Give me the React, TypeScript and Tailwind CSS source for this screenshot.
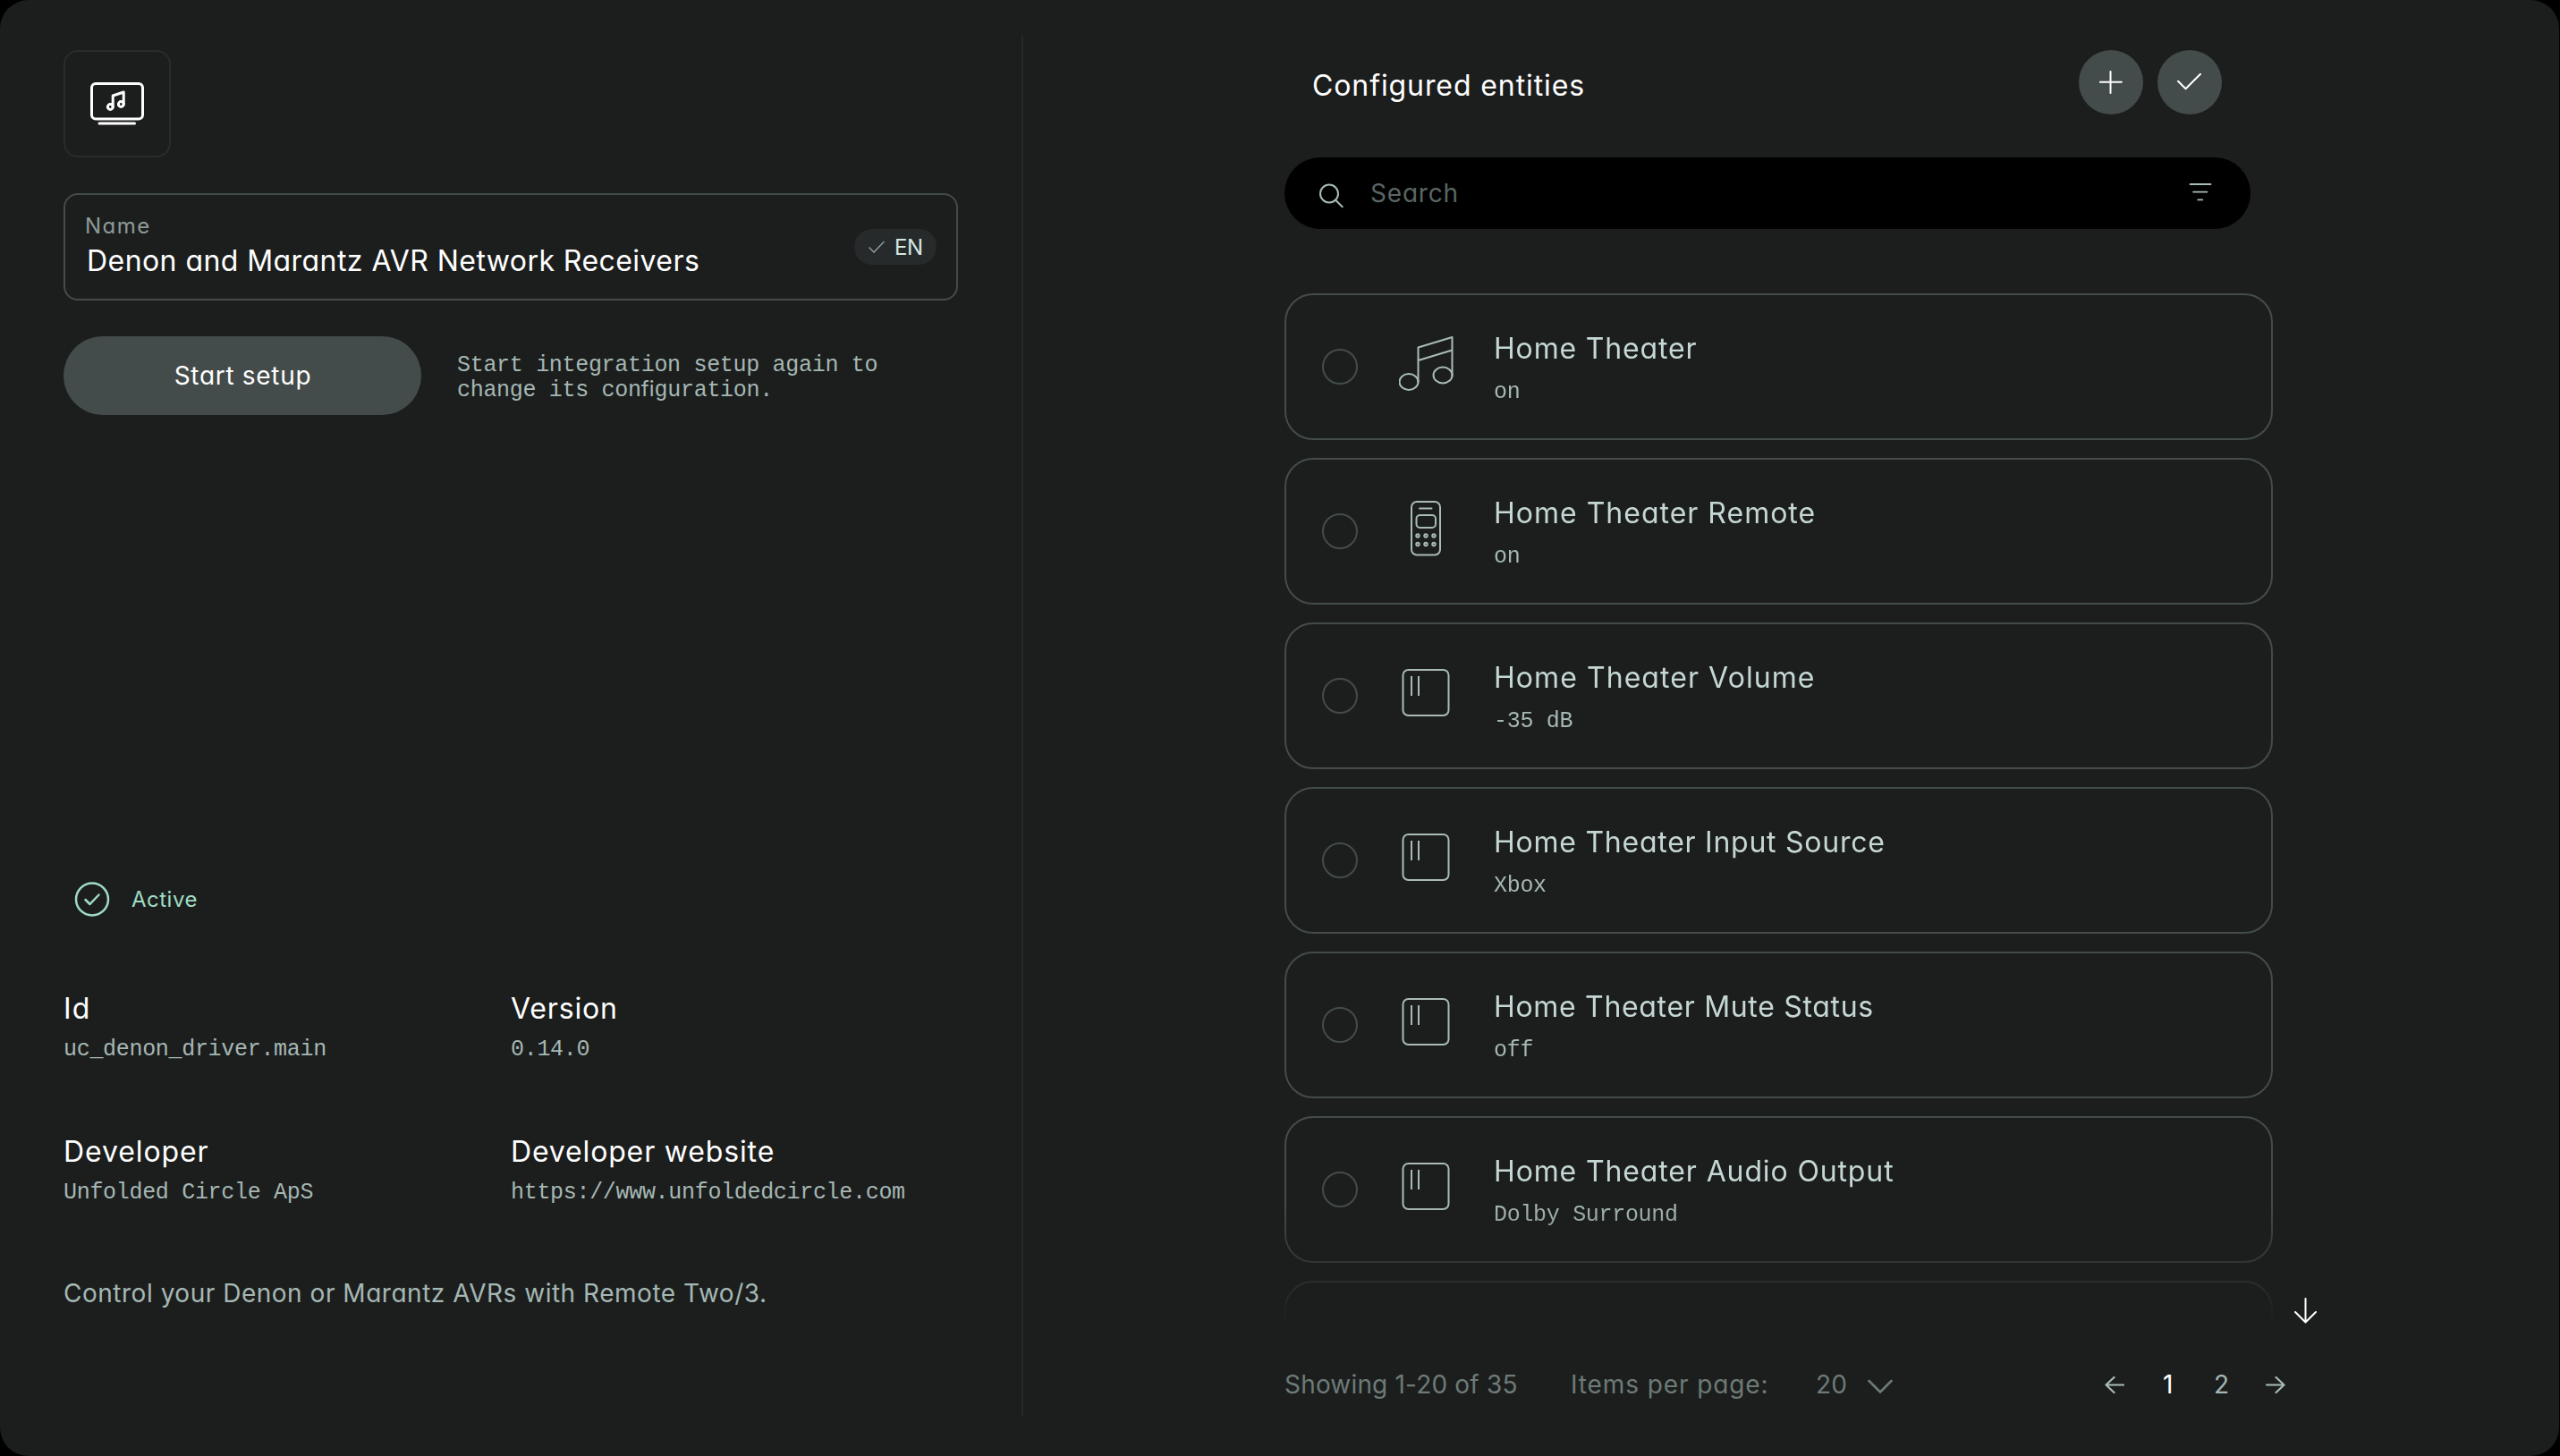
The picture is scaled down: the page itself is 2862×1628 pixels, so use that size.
import type { ReactNode } from "react";

const sans = "font-['Inter',sans-serif] [font-feature-settings:'cv11']";
const mono = "font-['Liberation_Mono',monospace] text-[25px] leading-[28px] tracking-[-0.31px] text-[#a5b7b4]";

function MusicIcon() {
  return (
    <svg width="62" height="62" viewBox="0 0 62 62" fill="none" stroke="#a9bbb8" strokeWidth="2" strokeLinejoin="round">
      <ellipse cx="11" cy="51" rx="10.5" ry="9" />
      <ellipse cx="49" cy="43.5" rx="10.5" ry="9" />
      <path d="M21.500 51.500V12.500L59.500 1V44.500M21.500 27L59.500 15.500" />
    </svg>
  );
}

function RemoteIcon() {
  return (
    <svg width="62" height="62" viewBox="0 0 62 62" fill="none" stroke="#a9bbb8" strokeWidth="2">
      <rect x="14" y="1" width="32" height="59.500" rx="6" />
      <path d="M23 8.500h13.500" strokeLinecap="round" />
      <rect x="19.500" y="16" width="21.500" height="14" rx="4" />
      {[39, 48.5].map((y) =>
        [21, 30, 39].map((x) => <circle key={`${x}-${y}`} cx={x} cy={y} r="1.700" />)
      )}
    </svg>
  );
}

function SensorIcon() {
  return (
    <svg width="62" height="62" viewBox="0 0 62 62" fill="none" stroke="#a9bbb8" strokeWidth="2">
      <rect x="4.500" y="5" width="51" height="51" rx="6" />
      <path d="M14 12v22M22 12v22" />
    </svg>
  );
}

const entities: { name: string; state: string; icon: ReactNode; spacing: string }[] = [
  { name: "Home Theater", state: "on", icon: <MusicIcon />, spacing: "tracking-[0.84px]" },
  { name: "Home Theater Remote", state: "on", icon: <RemoteIcon />, spacing: "tracking-[1px]" },
  { name: "Home Theater Volume", state: "-35 dB", icon: <SensorIcon />, spacing: "tracking-[1.06px]" },
  { name: "Home Theater Input Source", state: "Xbox", icon: <SensorIcon />, spacing: "tracking-[0.75px]" },
  { name: "Home Theater Mute Status", state: "off", icon: <SensorIcon />, spacing: "tracking-[0.68px]" },
  { name: "Home Theater Audio Output", state: "Dolby Surround", icon: <SensorIcon />, spacing: "tracking-[0.87px]" },
];

const details = [
  { label: "Id", value: "uc_denon_driver.main", spacing: "tracking-[1.2px]" },
  { label: "Version", value: "0.14.0", spacing: "tracking-[0.84px]" },
  { label: "Developer", value: "Unfolded Circle ApS", spacing: "tracking-[0.9px]" },
  { label: "Developer website", value: "https://www.unfoldedcircle.com", spacing: "tracking-[0.85px]" },
];

function IntegrationPanel() {
  return (
    <section className="flex w-[1142px] shrink-0 flex-col pt-14 pl-[71px]">
      <div className="flex size-[120px] items-center justify-center rounded-2xl border-2 border-[#292c2b]">
        <svg width="60" height="48" viewBox="0 0 60 48" fill="none" stroke="#fff" strokeWidth="3" strokeLinecap="round" strokeLinejoin="round">
          <rect x="1.500" y="1.500" width="57" height="39.500" rx="4.500" />
          <path d="M10 46h39.500" />
          <circle cx="22.300" cy="27.500" r="2.900" />
          <circle cx="34.300" cy="24.500" r="2.900" />
          <path d="M25.200 27.500V15L37.200 11V24.500" />
        </svg>
      </div>

      <div className="mt-10 flex h-[120px] w-[1000px] items-center justify-between rounded-2xl border-2 border-[#434c4a] pr-[22px] pl-[22px]">
        <div className="flex h-full flex-col pt-[19px]">
          <label className="text-[24px] leading-8 tracking-[1.5px] text-[#8d9b98]">Name</label>
          <span className="mt-[3px] ml-0.5 text-[32px] leading-10 tracking-[0.44px] text-white">
            Denon and Marantz AVR Network Receivers
          </span>
        </div>
        <div className="flex h-10 w-[92px] items-center gap-[11px] rounded-full bg-[#262a2b] pl-4">
          <svg width="18" height="14" viewBox="0 0 18 14" fill="none" stroke="#8d9b98" strokeWidth="1.500">
            <path d="M.5 7.500L6 13 17.500 1" />
          </svg>
          <span className="mt-px text-[24px] leading-8 tracking-[-0.43px] text-[#d5e6e2]">EN</span>
        </div>
      </div>

      <div className="mt-10 flex gap-10">
        <button className="h-[88px] w-[400px] rounded-full bg-[#434c4a] pl-px text-[28px] leading-8 tracking-[0.7px] text-white">
          Start setup
        </button>
        <p className={`w-[500px] pt-[19px] ${mono}`}>
          Start integration setup again to
          <br />
          change its con<span className="font-['Inter',sans-serif] text-[24px] leading-none tracking-[0.1px]">fi</span>guration.
        </p>
      </div>

      <div className="mt-[522px] flex h-10 items-center gap-6 pl-3">
        <svg width="40" height="40" viewBox="0 0 40 40" fill="none" stroke="#9fdcc4" strokeWidth="2.500" strokeLinecap="round" strokeLinejoin="round">
          <circle cx="20" cy="19.500" r="18" />
          <path d="M12.500 20L17.500 25 27.500 14.500" />
        </svg>
        <span className="text-[24px] leading-8 tracking-[0.5px] text-[#9fdcc4]">Active</span>
      </div>

      <dl className="mt-[82px] grid w-[1000px] grid-cols-2 gap-y-20">
        {details.map((d) => (
          <div key={d.label} className="flex flex-col gap-3">
            <dt className={`text-[32px] leading-10 text-white ${d.spacing}`}>{d.label}</dt>
            <dd className={mono}>{d.value}</dd>
          </div>
        ))}
      </dl>

      <p className="mt-[82px] text-[28px] leading-8 tracking-[0.52px] text-[#a5b7b4]">
        Control your Denon or Marantz AVRs with Remote Two/3.
      </p>
    </section>
  );
}

function EntitiesPanel() {
  return (
    <section className="flex flex-1 flex-col pt-14 pl-[292px]">
      <header className="flex h-[72px] w-[1048px] items-center gap-4 pl-[31px]">
        <h1 className="mr-auto pt-2 text-[32px] leading-10 tracking-[0.9px] text-white">Configured entities</h1>
        <button className="flex size-[72px] items-center justify-center rounded-full bg-[#434c4a]">
          <svg width="26" height="26" viewBox="0 0 26 26" fill="none" stroke="#fff" strokeWidth="2" strokeLinecap="round">
            <path d="M12.500 1v24M.8 12.800h24" />
          </svg>
        </button>
        <button className="flex size-[72px] items-center justify-center rounded-full bg-[#434c4a]">
          <svg width="28" height="20" viewBox="0 0 28 20" fill="none" stroke="#fff" strokeWidth="2" strokeLinecap="round" strokeLinejoin="round">
            <path d="M1 8.700L9.500 17.200 26 .8" />
          </svg>
        </button>
      </header>

      <div className="mt-12 flex h-20 w-[1080px] items-center rounded-full bg-black pr-[43px] pl-[38px]">
        <svg className="mt-1.5" width="29" height="28" viewBox="0 0 29 28" fill="none" stroke="#a9bbb8" strokeWidth="2" strokeLinecap="round">
          <circle cx="12" cy="11.500" r="10" />
          <path d="M19.200 18.800l7.500 7.500" />
        </svg>
        <span className="ml-[29px] text-[28px] leading-8 tracking-[0.8px] text-[#5a6664]">Search</span>
        <svg className="-mt-0.5 ml-auto" width="26" height="20" viewBox="0 0 26 20" fill="none" stroke="#a9bbb8" strokeWidth="1.800" strokeLinecap="round">
          <path d="M1.500 1h23M5 9.600h15.500M10.200 18.400h5" />
        </svg>
      </div>

      <div className="mt-[72px] flex items-end gap-6">
        <ul className="flex h-[1152px] w-[1105px] flex-col gap-5 overflow-hidden [mask-image:linear-gradient(to_bottom,#000_1020px,transparent_1151px)]">
          {entities.map((e) => (
            <li key={e.name} className="flex h-[164px] shrink-0 items-start rounded-[32px] border-2 border-[#434c4a] pl-10">
              <span className="mt-[60px] size-10 rounded-full border-2 border-[#434c4a]" />
              <span className="mt-[46px] ml-[46px]">{e.icon}</span>
              <div className="mt-10 ml-11 flex flex-col gap-[15px]">
                <span className={`text-[32px] leading-10 text-[#c5d7d4] ${e.spacing}`}>{e.name}</span>
                <span className={mono}>{e.state}</span>
              </div>
            </li>
          ))}
          <li className="h-[164px] shrink-0 rounded-[32px] border-2 border-[#434c4a]" />
        </ul>
        <svg width="26" height="29" viewBox="0 0 26 29" fill="none" stroke="#fff" strokeWidth="2" strokeLinecap="round" strokeLinejoin="round">
          <path d="M12.500 1v26M1 16l11.500 11.500L24 16" />
        </svg>
      </div>

      <footer className="mt-[52px] flex items-center text-[28px] leading-8 text-[#6d7a78]">
        <span className="w-80 tracking-[0.18px]">Showing 1-20 of 35</span>
        <span className="w-[274px] tracking-[0.9px]">Items per page:</span>
        <span className="w-[58px] tracking-[0.2px]">20</span>
        <svg className="mt-1" width="28" height="17" viewBox="0 0 28 17" fill="none" stroke="#6d7a78" strokeWidth="2.600" strokeLinecap="round" strokeLinejoin="round">
          <path d="M1.500 2L14 14.500 26.500 2" />
        </svg>
        <svg className="ml-[237px]" width="22" height="20" viewBox="0 0 22 20" fill="none" stroke="#a9bbb8" strokeWidth="2.200" strokeLinecap="round" strokeLinejoin="round">
          <path d="M21 10.500H1.500M10.500 2L1.500 10.500l9 8.500" />
        </svg>
        <span className="ml-[43px] w-[57px] text-white">1</span>
        <span className="w-[58px] text-[#a5b7b4]">2</span>
        <svg width="22" height="20" viewBox="0 0 22 20" fill="none" stroke="#a9bbb8" strokeWidth="2.200" strokeLinecap="round" strokeLinejoin="round">
          <path d="M1 10.500h19.500M11.500 2l9 8.500-9 8.500" />
        </svg>
      </footer>
    </section>
  );
}

export default function App() {
  return (
    <div className={`h-[1628px] w-[2862px] overflow-hidden bg-black ${sans}`}>
      <main className="flex h-full w-[2861px] rounded-[32px] bg-[#1c1e1d]">
        <IntegrationPanel />
        <div className="mt-10 h-[1544px] w-0.5 shrink-0 bg-[#272929]" />
        <EntitiesPanel />
      </main>
    </div>
  );
}
